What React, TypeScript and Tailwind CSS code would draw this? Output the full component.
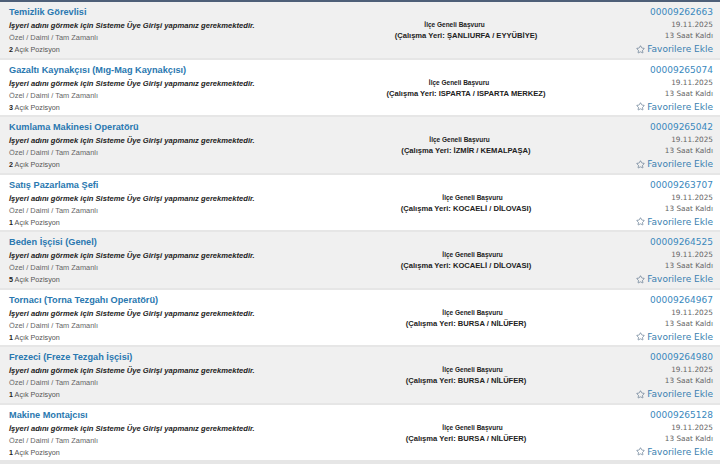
import React from "react";
import { Star } from "lucide-react";

type Job = {
  title: string;
  count: number;
  place: string;
  no: string;
  shift: string;
};

const jobs: Job[] = [
  { title: "Temizlik Görevlisi", count: 2, place: "ŞANLIURFA / EYYÜBİYE", no: "00009262663", shift: "mr-[23px]" },
  { title: "Gazaltı Kaynakçısı (Mıg-Mag Kaynakçısı)", count: 3, place: "ISPARTA / ISPARTA MERKEZ", no: "00009265074", shift: "mr-[14px]" },
  { title: "Kumlama Makinesi Operatörü", count: 2, place: "İZMİR / KEMALPAŞA", no: "00009265042", shift: "mr-[13px]" },
  { title: "Satış Pazarlama Şefi", count: 1, place: "KOCAELİ / DİLOVASI", no: "00009263707", shift: "ml-[13px]" },
  { title: "Beden İşçisi (Genel)", count: 5, place: "KOCAELİ / DİLOVASI", no: "00009264525", shift: "ml-[13px]" },
  { title: "Tornacı (Torna Tezgahı Operatörü)", count: 1, place: "BURSA / NİLÜFER", no: "00009264967", shift: "ml-[13px]" },
  { title: "Frezeci (Freze Tezgah İşçisi)", count: 1, place: "BURSA / NİLÜFER", no: "00009264980", shift: "ml-[13px]" },
  { title: "Makine Montajcısı", count: 1, place: "BURSA / NİLÜFER", no: "00009265128", shift: "ml-[13px]" },
];

const JobRow: React.FC<{ job: Job; odd: boolean }> = ({ job, odd }) => {
  return (
    <div
      className={`grid grid-cols-[300px_332px_88px] h-[55.5px] ${
        odd ? "bg-[#f0f0f0]" : "bg-white"
      }`}
    >
      <div className="pl-[9px] pt-[3px] font-['Liberation_Sans',Arial,sans-serif] whitespace-nowrap">
        <div className="leading-[14px] text-[9.2px] font-bold text-[#2a78b0]">
          {job.title}
        </div>
        <div className="leading-[14px] text-[7.6px] font-bold italic text-[#222]">
          İşyeri adını görmek için Sisteme Üye Girişi yapmanız gerekmektedir.
        </div>
        <div className="leading-[10px] text-[7.4px] text-[#666]">
          Özel / Daimi / Tam Zamanlı
        </div>
        <div className="leading-[14px] text-[7.2px] text-[#555]">
          <b className="text-[#222]">{job.count}</b> Açık Pozisyon
        </div>
      </div>

      <div className="pt-[17px] text-center font-['Liberation_Sans',Arial,sans-serif] text-[#222] whitespace-nowrap">
        <div className="leading-[11px] text-[6.5px] font-semibold">
          <span className={`inline-block ${job.shift}`}>İlçe Geneli Başvuru</span>
        </div>
        <div className="leading-[11px] text-[7.6px] font-bold">
          (Çalışma Yeri: {job.place})
        </div>
      </div>

      <div className="pr-[7px] pt-[3px] text-right font-['DejaVu_Sans',Verdana,sans-serif] whitespace-nowrap">
        <div className="leading-[14px] text-[9px] text-[#3a88bd]">{job.no}</div>
        <div className="leading-[12px] text-[7.3px] text-[#666]">19.11.2025</div>
        <div className="leading-[10px] text-[7.3px] text-[#666]">13 Saat Kaldı</div>
        <div className="leading-[16px] text-[9px] text-[#3a7fb0] flex items-center justify-end gap-[2px]">
          <Star size={9} strokeWidth={1.6} className="text-[#4a6580]" />
          <span>Favorilere Ekle</span>
        </div>
      </div>
    </div>
  );
};

export default function App() {
  return (
    <div className="w-[720px] h-[464px] bg-[#e6e6e6] overflow-hidden">
      <div className="h-[2px] bg-[#4e5f78]" />
      <div className="flex flex-col gap-[2px]">
        {jobs.map((job, i) => (
          <JobRow key={job.no} job={job} odd={i % 2 === 0} />
        ))}
      </div>
    </div>
  );
}
